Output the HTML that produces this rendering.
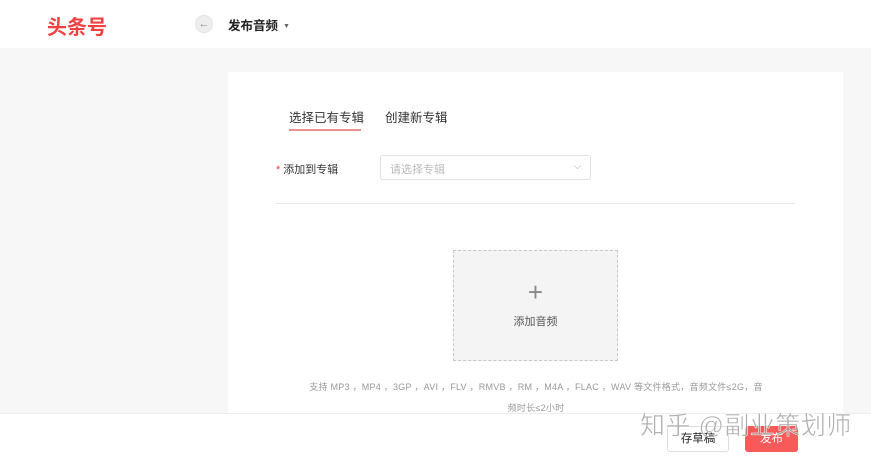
<!DOCTYPE html>
<html><head><meta charset="utf-8"><style>
*{margin:0;padding:0;box-sizing:border-box}
body{width:871px;height:458px;overflow:hidden;background:#f7f7f7;font-family:"Liberation Sans","Noto Sans CJK SC",sans-serif;position:relative}
.top{position:absolute;left:0;top:0;width:871px;height:48px;background:#fff}
.logo{position:absolute;left:47px;top:11px;font-size:20px;font-weight:bold;color:#f04142}
.back{position:absolute;left:195px;top:15px;width:18px;height:18px;border-radius:50%;background:#eee;border:1px solid #e4e4e4;color:#888;font-size:11px;text-align:center;line-height:16px}
.title{position:absolute;left:228px;top:15px;font-size:12.5px;font-weight:bold;color:#222}
.title span{font-size:7px;color:#666;margin-left:5px;font-weight:normal;vertical-align:2px}
.card{position:absolute;left:228px;top:72px;width:615px;height:341px;background:#fff}
.tab{position:absolute;top:107px;font-size:12.5px;color:#333}
.ul{position:absolute;left:289px;top:129px;width:72px;height:2px;background:#f09090}
.lbl{position:absolute;left:276px;top:161px;font-size:11px;color:#333}
.lbl b{color:#f04142;font-weight:normal;margin-right:3px}
.sel{position:absolute;left:380px;top:155px;width:211px;height:25px;border:1px solid #e2e2e2;border-radius:3px;font-size:11px;color:#bbb;padding:5px 9px}
.sel i{position:absolute;right:9px;top:5px;font-style:normal;color:#999;font-size:9px}
.hr{position:absolute;left:276px;top:203px;width:519px;height:1px;background:#e6e6e6}
.up{position:absolute;left:453px;top:250px;width:165px;height:111px;border:1px dashed #c8c8c8;background:#f4f4f4;text-align:center}
.up .p{font-size:26px;color:#888;margin-top:28px;line-height:26px;font-weight:200}
.up .t{font-size:11px;color:#555;margin-top:8px}
.note{position:absolute;left:290px;top:377px;width:492px;text-align:center;font-size:9px;color:#999;line-height:21px;white-space:nowrap;letter-spacing:0.25px}
.foot{position:absolute;left:0;top:413px;width:871px;height:45px;background:#fff;border-top:1px solid #eee}
.b1{position:absolute;left:667px;top:426px;width:62px;height:26px;border:1px solid #ddd;border-radius:3px;background:#fff;font-size:11.5px;color:#222;text-align:center;line-height:24px}
.b2{position:absolute;left:745px;top:426px;width:53px;height:26px;border-radius:3px;background:#f85959;font-size:11.5px;color:#fff;text-align:center;line-height:26px}
.wm{position:absolute;left:640px;top:406px;font-size:25px;color:rgba(150,150,150,.75);-webkit-text-stroke:0.5px #fff;white-space:nowrap;letter-spacing:0.5px}
</style></head><body>
<div class="top"><div class="logo">头条号</div><div class="back">←</div><div class="title">发布音频<span>▼</span></div></div>
<div class="card"></div>
<div class="tab" style="left:289px">选择已有专辑</div>
<div class="tab" style="left:385px">创建新专辑</div>
<div class="ul"></div>
<div class="lbl"><b>*</b>添加到专辑</div>
<div class="sel">请选择专辑<i>⌵</i></div>
<div class="hr"></div>
<div class="up"><div class="p">+</div><div class="t">添加音频</div></div>
<div class="note">支持 MP3 ，MP4 ，3GP ，AVI ，FLV ，RMVB ，RM ，M4A ，FLAC ，WAV 等文件格式，音频文件≤2G，音<br>频时长≤2小时</div>
<div class="foot"></div>
<div class="b1">存草稿</div>
<div class="b2">发布</div>
<div class="wm">知乎 @副业策划师</div>
</body></html>
